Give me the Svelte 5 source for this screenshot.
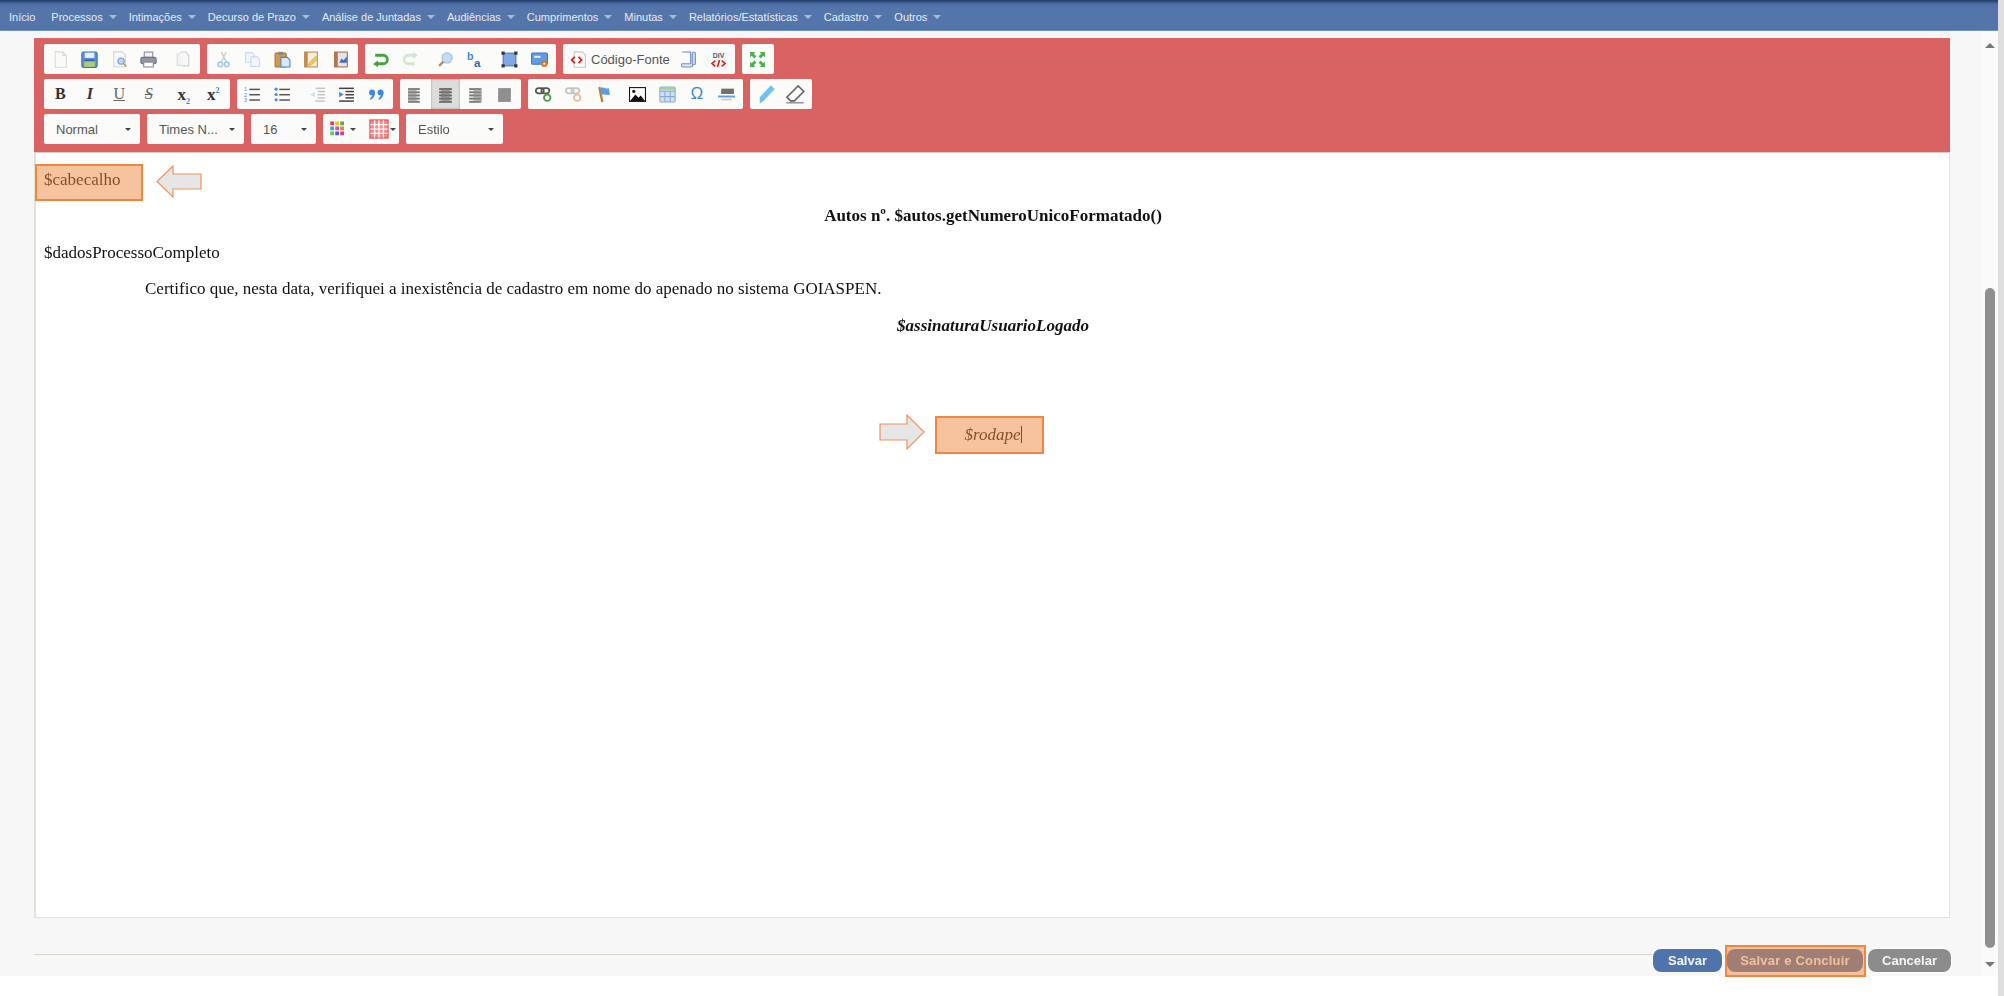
<script lang="ts">
    const menu = [
        ["Início", false],
        ["Processos", true],
        ["Intimações", true],
        ["Decurso de Prazo", true],
        ["Análise de Juntadas", true],
        ["Audiências", true],
        ["Cumprimentos", true],
        ["Minutas", true],
        ["Relatórios/Estatísticas", true],
        ["Cadastro", true],
        ["Outros", true],
    ];

    const lines = (x: number, ys: number[], w: number, c: string, h = 1.4) =>
        ys.map((y) => `<rect x="${x}" y="${y}" width="${w}" height="${h}" fill="${c}"/>`).join("");

    const icons: Record<string, string> = {
        newdoc: `<path d="M3 .8h7l3.500 3.500v11H3z" fill="#fafafa" stroke="#d9d9d9"/><path d="M10 .8v3.500h3.500" fill="none" stroke="#d9d9d9"/>`,
        save: `<rect x=".8" y="1" width="14.400" height="14.400" rx="1.500" fill="#5f90d8" stroke="#3f6cae"/><rect x="3.500" y="1.500" width="9" height="5" fill="#e8eef8"/><rect x="3" y="10" width="10" height="5" fill="#a8cf78"/><rect x="3" y="8" width="10" height="1.200" fill="#2f5c9e"/>`,
        preview: `<path d="M2.500 .8h8l3 3v11h-11z" fill="#f8f8f8" stroke="#d4d4d4"/><circle cx="9.500" cy="9.500" r="3" fill="#bcd6f2" stroke="#6f9ccc"/><path d="M12 12l2.400 2.600" stroke="#e08a3c" stroke-width="1.600"/>`,
        print: `<rect x="4" y="1" width="8" height="5" fill="#f2f2f2" stroke="#8a8a8a"/><rect x=".8" y="6" width="14.400" height="6" rx="1.500" fill="#8c98a8" stroke="#6b7482"/><rect x="3.500" y="10.500" width="9" height="4.500" fill="#fff" stroke="#8a8a8a"/>`,
        templates: `<path d="M2 2.500h6l2 2v9H2z" fill="#f2f2f2" stroke="#dadada"/><path d="M5 1h5l3 3v10H7" fill="#f7f7f7" stroke="#cfcfcf"/>`,
        cut: `<path d="M10.500 1 6 10M6 1l4.500 9" stroke="#c8ccd0" stroke-width="1.300" fill="none"/><circle cx="5" cy="12.500" r="2.200" fill="none" stroke="#a8c4e2" stroke-width="1.400"/><circle cx="11" cy="12.500" r="2.200" fill="none" stroke="#a8c4e2" stroke-width="1.400"/>`,
        copy: `<path d="M1.500 1.500h6l2 2v7h-8z" fill="#f2f6fb" stroke="#c7d8ee"/><path d="M6.500 5.500h6l2 2v7h-8z" fill="#f2f6fb" stroke="#c7d8ee"/>`,
        paste: `<rect x="1" y="2" width="10.500" height="13" rx="1" fill="#d39a4c" stroke="#a8742e"/><rect x="4" y=".8" width="4.500" height="3" fill="#8a8a7a"/><path d="M6.500 6h6L15 8.500V15H6.500z" fill="#dbe8f8" stroke="#4f84c8"/>`,
        pastetext: `<rect x="1.500" y="1" width="12" height="14" fill="#f3efe0" stroke="#b98a50"/><rect x="1.500" y="1" width="3" height="14" fill="#c98b4a"/><path d="M6 11l6-6 2 2-6 6-3 .6z" fill="#f2c94c" stroke="#c79a20" stroke-width=".6"/>`,
        pasteword: `<rect x="1.500" y="1" width="12" height="14" fill="#dfe4ee" stroke="#a67048"/><rect x="1.500" y="1" width="3" height="14" fill="#b9744a"/><path d="M6 11l2-4 2 2 3-4v6z" fill="#3f6cc0"/>`,
        undo: `<path d="M3 4h7.500a4 4 0 0 1 0 8H4" fill="none" stroke="#4aa040" stroke-width="2.600"/><path d="M5.600 9 1 12.200l4.600 3.200z" fill="#4aa040"/>`,
        redo: `<path d="M12 4H6a4 4 0 0 0 0 8h6" fill="none" stroke="#d2e6d2" stroke-width="2.600"/><path d="M10.500.8 15 4l-4.500 3.200z" fill="#d2e6d2"/>`,
        find: `<circle cx="9.500" cy="6.500" r="4.800" fill="#c6dcf4" stroke="#9cbde0"/><path d="M6 10l-4 4" stroke="#c08a50" stroke-width="2.200"/>`,
        replace: `<text x="1" y="8.500" font-size="10" font-weight="700" font-family="Liberation Sans" fill="#3f86d8">b</text><text x="7.500" y="15" font-size="11" font-weight="700" font-family="Liberation Sans" fill="#2f6cc0">a</text>`,
        selectall: `<rect x="2" y="2" width="12" height="12" fill="#7fa8e4" stroke="#5078b8"/><g fill="#333"><rect x=".5" y=".5" width="3" height="3"/><rect x="12.500" y=".5" width="3" height="3"/><rect x=".5" y="12.500" width="3" height="3"/><rect x="12.500" y="12.500" width="3" height="3"/></g>`,
        spell: `<rect x=".5" y="2" width="15" height="10.500" rx="1" fill="#5f9ce4" stroke="#3f78c0"/><rect x="3" y="4.500" width="6" height="2" fill="#dceafa"/><circle cx="12.500" cy="12" r="3" fill="#e8742c"/><circle cx="12.500" cy="12" r="1" fill="#fff"/>`,
        source: `<path d="M4 .8h7.500l3 3v11.500H4z" fill="#fafafa" stroke="#c8c8c8"/><path d="M4.500 5.500 1.500 8.500l3 3M8 5.500l3 3-3 3" fill="none" stroke="#e02020" stroke-width="1.700"/>`,
        blocks: `<path d="M2 1h8v11H2a2 2 0 0 0 0 3h8a2 2 0 0 0 2-2V3" fill="#dfe8f4" stroke="#6f92c0"/><rect x="11.500" y="1" width="3" height="12" rx="1.500" fill="#cfe0f4" stroke="#6f92c0"/>`,
        div: `<text x="8" y="6.500" text-anchor="middle" font-size="6.500" font-weight="700" font-family="Liberation Sans" fill="#555">DIV</text><path d="M5 9 1.800 11.700 5 14.500M11 9l3.200 2.700L11 14.500M9 8.500l-2 6.500" fill="none" stroke="#d82020" stroke-width="1.500"/>`,
        maximize: `<path d="M1 1h5L4.500 2.500 7 5 5 7 2.500 4.500 1 6zM15 1v5l-1.500-1.500L11 7 9 5l2.500-2.500L10 1zM1 15v-5l1.500 1.500L5 9l2 2-2.500 2.500L6 15zM15 15h-5l1.500-1.500L9 11l2-2 2.500 2.500L15 10z" fill="#4caf50"/>`,
        numlist: `<text x="0" y="5" font-size="5" font-family="Liberation Sans" fill="#4a8ed8">1</text><text x="0" y="10" font-size="5" font-family="Liberation Sans" fill="#4a8ed8">2</text><text x="0" y="15" font-size="5" font-family="Liberation Sans" fill="#4a8ed8">3</text>` + lines(5, [2.5, 7.5, 12.5], 10, "#555"),
        bullist: `<g fill="#4a8ed8"><circle cx="2" cy="3" r="1.500"/><circle cx="2" cy="8" r="1.500"/><circle cx="2" cy="13" r="1.500"/></g>` + lines(5, [2.5, 7.5, 12.5], 10, "#555"),
        outdent: lines(6, [1.5, 13.5], 9, "#c4c4c4") + lines(8, [4.5, 7.5, 10.5], 7, "#c4c4c4") + `<path d="M5.500 5.500 1 8l4.500 2.500z" fill="#cfe0f4"/>`,
        indent: lines(1, [1.5, 13.5], 14, "#444") + lines(7, [4.5, 7.5, 10.5], 8, "#444") + `<path d="M1 5.500 5.500 8 1 10.500z" fill="#4a8ed8"/>`,
        quote: `<circle cx="3.800" cy="6" r="2.800" fill="#3f86e0"/><path d="M6.600 6c0 3.500-1.600 6-4.400 7l-.5-1c1.500-1 2.300-2.500 2.300-4z" fill="#3f86e0"/><circle cx="11.800" cy="6" r="2.800" fill="#3f86e0"/><path d="M14.600 6c0 3.500-1.600 6-4.400 7l-.5-1c1.500-1 2.300-2.500 2.300-4z" fill="#3f86e0"/>`,
        left: lines(1, [2, 5, 8, 11, 14], 11, "#777", 1.8) + `<rect x="1" y="2" width="8" height="13" fill="#8a8a8a" opacity=".6"/>`,
        center: lines(2, [2, 5, 8, 11, 14], 12, "#666", 1.8) + `<rect x="4" y="2" width="8" height="13" fill="#777" opacity=".6"/>`,
        right: lines(3, [2, 5, 8, 11, 14], 11, "#777", 1.8) + `<rect x="7" y="2" width="8" height="13" fill="#8a8a8a" opacity=".6"/>`,
        justify: `<rect x="2" y="2" width="12" height="13" fill="#8f8f8f"/>`,
        link: `<g fill="none" stroke="#555" stroke-width="1.700"><rect x=".8" y="2" width="7.500" height="5" rx="2.500"/><rect x="6" y="2" width="7.500" height="5" rx="2.500"/></g><circle cx="11.500" cy="11" r="3" fill="#fff" stroke="#4aa040" stroke-width="1.800"/>`,
        unlink: `<g fill="none" stroke="#c4c4c4" stroke-width="1.700"><rect x=".8" y="2" width="7.500" height="5" rx="2.500"/><rect x="6" y="2" width="7.500" height="5" rx="2.500"/></g><circle cx="11.500" cy="11" r="3" fill="#fff" stroke="#f0b890" stroke-width="1.800"/>`,
        anchor: `<path d="M5 1l2.800 14" stroke="#b9803e" stroke-width="2.200"/><path d="M6 2c3-1.500 4 1 8 0l1 6c-3 1.500-5-1-8 .5z" fill="#5f9ce4"/>`,
        image: `<rect x=".5" y="1.500" width="15" height="13" fill="#fff" stroke="#111"/><path d="M1 14l5-6 3 3 2-2 4 5z" fill="#111"/><circle cx="4.500" cy="5" r="1.500" fill="#111"/>`,
        table: `<rect x=".8" y="1" width="14.400" height="14" rx="1" fill="#cfe0f4" stroke="#88a8d4"/><path d="M1 5h14M1 10h14M5.500 5v10M10.500 5v10" stroke="#88a8d4"/><rect x="1" y="1.500" width="14" height="2" fill="#a8d088"/>`,
        hr: `<rect x="3" y="2.500" width="12" height="5" fill="#6f6f6f"/><rect x="0" y="9" width="16" height="1.800" fill="#5f9ce4"/><rect x="3" y="12" width="10" height="1.500" fill="#c8c8c8"/>`,
        pen: `<path d="M12 1l3 3-9 9.500-3-3zM3 10.500l3 3-3 2z" fill="#6ec4f0"/>`,
        eraser: `<path d="M10.500 1.500 15 6l-7.500 7.500H4.500L1.500 10.500z" fill="#fff" stroke="#666" stroke-width="1.300"/><path d="M1 15h14" stroke="#999" stroke-width="1.300"/>`,
        colors: `<rect x="1" y="2" width="3" height="3" fill="#e04040"/><rect x="5" y="2" width="3" height="3" fill="#f0c030"/><rect x="9" y="2" width="3" height="3" fill="#50b050"/><rect x="1" y="6" width="3" height="3" fill="#40a0e0"/><rect x="5" y="6" width="3" height="3" fill="#e050a0"/><rect x="9" y="6" width="3" height="3" fill="#f08030"/><rect x="1" y="10" width="3" height="3" fill="#70c050"/><rect x="5" y="10" width="3" height="3" fill="#5060d0"/><rect x="9" y="10" width="3" height="3" fill="#d04080"/>`,
        grid: `<rect x=".8" y=".8" width="14.400" height="14.400" fill="#f88" stroke="#e85050"/><path d="M4.500 1v14M8 1v14M11.500 1v14M1 4.500h14M1 8h14M1 11.500h14" stroke="#fff" stroke-width="1"/>`,
    };

    const bigIcons = ["pen", "eraser", "grid", "colors"];

    const row1 = [
        ["newdoc", "save", "preview", "print", "|", "templates"],
        ["cut", "copy", "paste", "pastetext", "pasteword"],
        ["undo", "redo", "|", "find", "replace", "|", "selectall", "spell"],
    ];
    const row1b = ["maximize"];
    const row2lists = ["numlist", "bullist", "|", "outdent", "indent", "quote"];
    const row2align = ["left", "center", "right", "justify"];
    const row2ins = ["link", "unlink", "anchor", "|", "image", "table", "omega", "hr"];
    const row2pen = ["pen", "eraser"];
    const selects = [
        ["Normal", 96],
        ["Times N...", 97],
        ["16", 65],
    ];
</script>

{#snippet icon(name: string)}
    <svg class="ico" class:big={bigIcons.includes(name)} viewBox="0 0 16 16" aria-hidden="true">{@html icons[name]}</svg>
{/snippet}

{#snippet button(name: string)}
    {#if name === "|"}
        <span class="sep"></span>
    {:else if name === "omega"}
        <span class="btn omega">Ω</span>
    {:else}
        <span class="btn" class:on={name === "center"}>{@render icon(name)}</span>
    {/if}
{/snippet}

{#snippet group(names: string[])}
    <div class="group">
        {#each names as name}
            {@render button(name)}
        {/each}
    </div>
{/snippet}

<div class="window">
    <div class="page">
        <nav class="menu">
            {#each menu as [label, caret]}
                <span class="menu-item">{label}{#if caret}<i class="menu-caret"></i>{/if}</span>
            {/each}
        </nav>

        <div class="main">
            <div class="content">
                <section class="editor">
                    <div class="toolbar">
                        <div class="row">
                            {#each row1 as names}
                                {@render group(names)}
                            {/each}
                            <div class="group">
                                <span class="btn source">{@render icon("source")}<b>Código-Fonte</b></span>
                                {@render button("blocks")}
                                {@render button("div")}
                            </div>
                            {@render group(row1b)}
                        </div>
                        <div class="row">
                            <div class="group">
                                <span class="btn fmt"><b>B</b></span>
                                <span class="btn fmt"><b><em>I</em></b></span>
                                <span class="btn fmt light"><u>U</u></span>
                                <span class="btn fmt light"><s><em>S</em></s></span>
                                <span class="sep"></span>
                                <span class="btn fmt small"><b>x<sub>2</sub></b></span>
                                <span class="btn fmt small"><b>x<sup>2</sup></b></span>
                            </div>
                            {@render group(row2lists)}
                            {@render group(row2align)}
                            {@render group(row2ins)}
                            {@render group(row2pen)}
                        </div>
                        <div class="row">
                            {#each selects as [label, width]}
                                <div class="group select" style="width: {width}px">
                                    <span>{label}</span><i class="caret"></i>
                                </div>
                            {/each}
                            <div class="group colors">
                                <span class="color">{@render icon("colors")}<i class="caret"></i></span>
                                <span class="color">{@render icon("grid")}<i class="caret"></i></span>
                            </div>
                            <div class="group select" style="width: 97px">
                                <span>Estilo</span><i class="caret"></i>
                            </div>
                        </div>
                    </div>

                    <div class="doc">
                        <p>
                            <span class="note">
                                $cabecalho
                                <span class="mark mark-head"></span>
                                <svg class="arrow arrow-left" viewBox="0 0 46 33" aria-hidden="true">
                                    <path d="M45 9H17V1L1 16.500 17 32v-8h28z" />
                                </svg>
                            </span>
                        </p>
                        <p class="center"><b>Autos nº. $autos.getNumeroUnicoFormatado()</b></p>
                        <p>$dadosProcessoCompleto</p>
                        <p class="indent">Certifico que, nesta data, verifiquei a inexistência de cadastro em nome do apenado no sistema GOIASPEN.</p>
                        <p class="center"><b><em>$assinaturaUsuarioLogado</em></b></p>
                        <p>&nbsp;</p>
                        <p>&nbsp;</p>
                        <p class="center">
                            <span class="note">
                                <em>$rodape</em><i class="cursor"></i>
                                <span class="mark mark-foot"></span>
                                <svg class="arrow arrow-right" viewBox="0 0 46 36" aria-hidden="true">
                                    <path d="M1 10h27V1l17 17-17 17v-9H1z" />
                                </svg>
                            </span>
                        </p>
                    </div>
                </section>

                <footer class="actions">
                    <div class="rule"></div>
                    <span class="action save">Salvar</span>
                    <span class="action done">Salvar e Concluir<span class="mark mark-btn"></span></span>
                    <span class="action cancel">Cancelar</span>
                </footer>
            </div>

            <aside class="scroll">
                <i class="scroll-up"></i>
                <div class="thumb"></div>
                <i class="scroll-down"></i>
            </aside>
        </div>
    </div>
    <div class="edge"></div>
</div>

<style>
    :global(body) {
        margin: 0;
        background: #fff;
        overflow: hidden;
    }

    .window {
        display: flex;
        width: 2004px;
        height: 996px;
        overflow: hidden;
        font-family: "Liberation Sans", Arial, sans-serif;
        filter: blur(0.45px);
    }

    .page {
        flex: 1;
        min-width: 0;
        display: flex;
        flex-direction: column;
    }

    .edge {
        width: 6px;
        background: #dedede;
    }

    .menu {
        display: flex;
        align-items: center;
        gap: 12px;
        height: 31px;
        box-sizing: border-box;
        padding: 3px 0 0 9px;
        background: linear-gradient(#1f3a66 0, #4c6fa6 4px, #5475aa 8px);
        border-bottom: 1px solid #6f8fc0;
        color: #e6ecf5;
        font-size: 11px;
    }

    .menu-item {
        display: inline-flex;
        align-items: center;
        white-space: nowrap;
    }

    .menu-item:first-child {
        margin-right: 4px;
    }

    .menu-caret {
        margin-left: 6px;
        border: 4px solid transparent;
        border-top-color: #a9bcd8;
        border-bottom: 0;
    }

    .main {
        height: 945px;
        display: flex;
        background: #f7f7f7;
    }

    .content {
        flex: 1;
        min-width: 0;
        padding: 7px 0 0 34px;
    }

    .editor {
        width: 1916px;
        height: 880px;
        box-sizing: border-box;
        background: #fff;
        border: 1px solid #e2e2d4;
        border-top: 0;
        border-left-width: 2px;
    }

    .toolbar {
        display: flex;
        flex-direction: column;
        gap: 5px;
        height: 115px;
        box-sizing: border-box;
        margin-left: -2px;
        margin-right: -1px;
        padding: 6px 10px 0;
        background: #d96363;
        border-bottom: 1px solid #e2c9c4;
    }

    .row {
        display: flex;
        gap: 7px;
        height: 30px;
    }

    .group {
        display: flex;
        align-items: center;
        height: 30px;
        box-sizing: border-box;
        padding: 0 1.5px;
        background: #fbfbf9;
        border-radius: 2px;
    }

    .btn {
        display: grid;
        place-items: center;
        flex: none;
        width: 29.5px;
        height: 28px;
    }

    .btn.on {
        height: 30px;
        background: #dcdcd8;
        box-shadow: inset 0 0 2px #888;
    }

    .sep {
        flex: none;
        width: 5.5px;
    }

    .ico {
        display: block;
        width: 17px;
        height: 17px;
    }

    .ico.big {
        width: 20px;
        height: 20px;
    }

    .source {
        display: flex;
        align-items: center;
        gap: 4px;
        width: 110px;
        padding-left: 6px;
        box-sizing: border-box;
    }

    .source b {
        color: #555;
        font-size: 13px;
        font-weight: 400;
        white-space: nowrap;
    }

    .omega {
        color: #3f86d8;
        font-size: 17px;
        font-weight: 400;
    }

    .fmt {
        color: #333;
        font-family: "Liberation Serif", serif;
        font-size: 16px;
    }

    .fmt.light {
        color: #666;
    }

    .fmt.small {
        font-size: 17px;
        line-height: 1;
    }

    .fmt sub,
    .fmt sup {
        color: #3f86d8;
        font-size: 8px;
        line-height: 0;
    }

    .select {
        justify-content: space-between;
        padding: 0 9px 0 12px;
        color: #555;
        font-size: 13px;
    }

    .caret {
        flex: none;
        border: 3px solid transparent;
        border-top: 3px solid #444;
        border-bottom: 0;
    }

    .colors {
        justify-content: space-between;
        width: 76px;
        padding: 0 3px 0 6px;
    }

    .color {
        display: flex;
        align-items: center;
        gap: 1px;
    }

    .doc {
        padding: 18px 7px 0 8px;
        color: #111;
        font-family: "Liberation Serif", serif;
        font-size: 17px;
        line-height: 18.4px;
    }

    .doc p {
        margin: 0 0 18px;
    }

    .doc .center {
        text-align: center;
    }

    .doc .indent {
        padding-left: 101px;
    }

    .note {
        position: relative;
        display: inline-block;
    }

    .cursor {
        display: inline-block;
        width: 1px;
        height: 17px;
        background: #111;
        vertical-align: -3px;
    }

    .mark {
        position: absolute;
        box-sizing: border-box;
        background: rgba(240, 135, 63, 0.5);
        border: 2px solid #f0873f;
    }

    .mark-head {
        left: -9px;
        top: -7px;
        width: 108px;
        height: 37px;
    }

    .mark-foot {
        left: -29px;
        top: -10px;
        width: 109px;
        height: 38px;
    }

    .mark-btn {
        inset: -4px -3px -5px -2px;
        border-radius: 0;
    }

    .arrow {
        position: absolute;
        fill: #e6e6e6;
        stroke: #f0935a;
        stroke-width: 1.2;
    }

    .arrow-left {
        left: 112px;
        top: -6px;
        width: 46px;
        height: 33px;
    }

    .arrow-right {
        left: -85px;
        top: -12px;
        width: 46px;
        height: 36px;
    }

    .actions {
        display: flex;
        align-items: flex-start;
        width: 1917px;
        height: 23px;
        margin-top: 31px;
    }

    .rule {
        flex: 1;
        height: 1px;
        margin-top: 5px;
        background: #d8d8c6;
    }

    .action {
        position: relative;
        display: grid;
        place-items: center;
        height: 23px;
        color: #f4f6fa;
        font-size: 13px;
        font-weight: 700;
        border-radius: 8px;
        box-shadow: 0 0 0 1px #fff;
    }

    .save {
        width: 69px;
        background: #4f74ab;
    }

    .done {
        width: 136px;
        margin-left: 5px;
        background: #4f74ab;
        letter-spacing: 0.2px;
    }

    .cancel {
        width: 83px;
        margin-left: 5px;
        background: #8c8c8c;
    }

    .scroll {
        position: relative;
        flex: none;
        width: 17px;
        display: flex;
        flex-direction: column;
        align-items: center;
        background: #fafafa;
    }

    .thumb {
        width: 10px;
        height: 660px;
        margin-top: 240px;
        background: #8f8f8f;
        border-radius: 5px;
    }

    .scroll-up,
    .scroll-down {
        border: 5px solid transparent;
    }

    .scroll-up {
        margin-top: 12px;
        border-bottom-color: #777;
        border-top: 0;
    }

    .scroll-down {
        margin-top: 14px;
        border-top-color: #777;
        border-bottom: 0;
    }
</style>
